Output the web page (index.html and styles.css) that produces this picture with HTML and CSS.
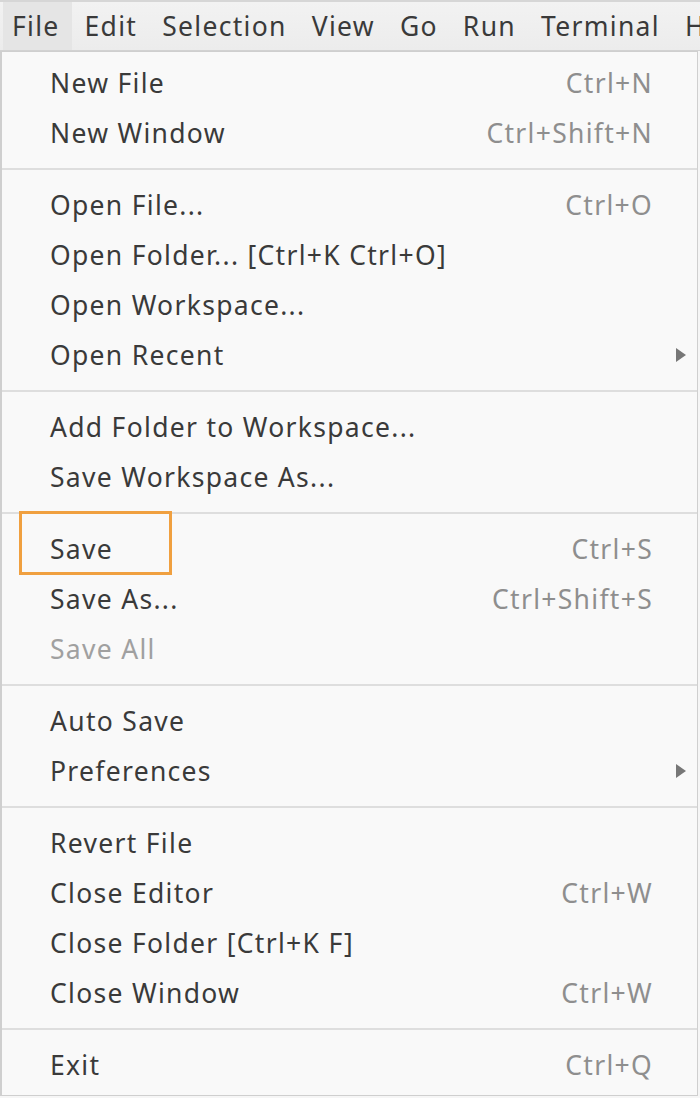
FILE: index.html
```html
<!DOCTYPE html>
<html>
<head>
<meta charset="utf-8">
<link rel="stylesheet" href="styles.css">
</head>
<body>
<div class="menubar">
  <div class="mb-item active">File</div>
  <div class="mb-item">Edit</div>
  <div class="mb-item">Selection</div>
  <div class="mb-item">View</div>
  <div class="mb-item">Go</div>
  <div class="mb-item">Run</div>
  <div class="mb-item">Terminal</div>
  <div class="mb-item">Help</div>
</div>
<div class="menu">
  <div class="row"><span class="label">New File</span><span class="key">Ctrl+N</span></div>
  <div class="row"><span class="label">New Window</span><span class="key">Ctrl+Shift+N</span></div>
  <div class="sep"></div>
  <div class="row"><span class="label">Open File...</span><span class="key">Ctrl+O</span></div>
  <div class="row"><span class="label">Open Folder... [Ctrl+K Ctrl+O]</span></div>
  <div class="row"><span class="label">Open Workspace...</span></div>
  <div class="row"><span class="label">Open Recent</span><span class="arrow"></span></div>
  <div class="sep"></div>
  <div class="row"><span class="label">Add Folder to Workspace...</span></div>
  <div class="row"><span class="label">Save Workspace As...</span></div>
  <div class="sep"></div>
  <div class="row highlight"><span class="label">Save</span><span class="key">Ctrl+S</span></div>
  <div class="row"><span class="label">Save As...</span><span class="key">Ctrl+Shift+S</span></div>
  <div class="row disabled"><span class="label">Save All</span></div>
  <div class="sep"></div>
  <div class="row"><span class="label">Auto Save</span></div>
  <div class="row"><span class="label">Preferences</span><span class="arrow"></span></div>
  <div class="sep"></div>
  <div class="row"><span class="label">Revert File</span></div>
  <div class="row"><span class="label">Close Editor</span><span class="key">Ctrl+W</span></div>
  <div class="row"><span class="label">Close Folder [Ctrl+K F]</span></div>
  <div class="row"><span class="label">Close Window</span><span class="key">Ctrl+W</span></div>
  <div class="sep"></div>
  <div class="row"><span class="label">Exit</span><span class="key">Ctrl+Q</span></div>
</div>
</body>
</html>
```

FILE: styles.css
```css
html, body {
  margin: 0;
  padding: 0;
  background: #f6f6f6;
  overflow: hidden;
}
body {
  width: 700px;
  height: 1098px;
  font-family: "Noto Sans", "Open Sans", sans-serif;
  font-size: 26.5px;
  letter-spacing: 1.3px;
  color: #3a3a3a;
}
.menubar {
  height: 48px;
  border-top: 2px solid #d6d6d6;
  background: linear-gradient(#f2f2f2, #ececec);
  display: flex;
  align-items: stretch;
  white-space: nowrap;
  padding-left: 3px;
  box-shadow: 0 1px 0 #d2d2d2;
  overflow: hidden;
}
.mb-item {
  display: flex;
  align-items: center;
  flex-shrink: 0;
  padding: 0 12px 0 9px;
  margin-right: 4px;
}
.mb-item.active {
  background: #e5e5e5;
}
.menu {
  margin-top: 1px;
  height: 1045px;
  box-sizing: border-box;
  width: 698px;
  background: #f9f9f9;
  border: 1px solid #cfcfcf;
  border-left-width: 2px;
  padding-top: 6px;
  position: relative;
}
.row {
  height: 50px;
  display: flex;
  align-items: center;
  padding: 0 44px 0 48px;
  white-space: nowrap;
  position: relative;
}
.label {
  flex: 1;
}
.key {
  color: #8e8e8e;
}
.disabled .label {
  color: #a0a0a0;
}
.arrow {
  position: absolute;
  right: 11px;
  top: 18px;
  width: 0;
  height: 0;
  border-top: 7px solid transparent;
  border-bottom: 7px solid transparent;
  border-left: 10px solid #777;
}
.sep {
  height: 2px;
  background: #dedede;
  margin: 10px 0;
}
.highlight::after {
  content: "";
  position: absolute;
  left: 17px;
  top: -13px;
  width: 147px;
  height: 58px;
  border: 3px solid #f0a040;
}
```
